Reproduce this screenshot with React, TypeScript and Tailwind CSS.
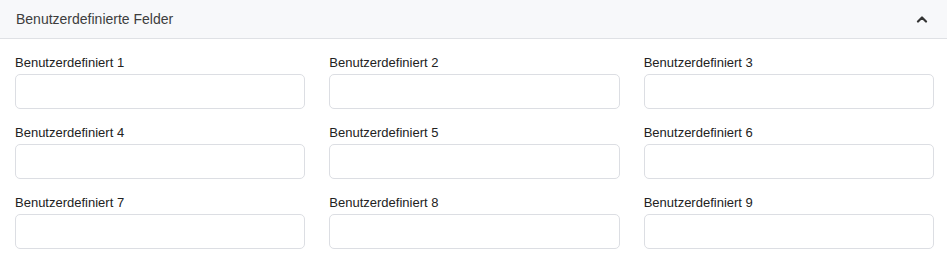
import React from 'react';

const fields = Array.from({ length: 9 }, (_, i) => `Benutzerdefiniert ${i + 1}`);

const ChevronUp = () => (
  <svg width="12" height="8" viewBox="0 0 12 8" fill="none">
    <path d="M2 6.5 L6 2.5 L10 6.5" stroke="#333" strokeWidth="2.2" strokeLinecap="round" strokeLinejoin="round" />
  </svg>
);

export default function App() {
  return (
    <div className="w-[947px] h-[273px] bg-white font-['Liberation_Sans',Arial,sans-serif]">
      <div className="h-[39px] flex items-center justify-between pl-4 pr-[19px] bg-[#f7f8fa] border-b border-[#dfe1e5]">
        <span className="text-[14px] text-[#3d3d3d]">Benutzerdefinierte Felder</span>
        <ChevronUp />
      </div>
      <div className="grid grid-cols-3 gap-x-6 gap-y-[15px] pl-[15px] pr-[13px] pt-[15px]">
        {fields.map((f) => (
          <div key={f} className="flex flex-col">
            <label className="text-[13px] leading-[17px] text-[#222] mb-[3px]">{f}</label>
            <input className="h-[35px] w-full rounded-[5px] border border-[#dcdee3] bg-white outline-none" />
          </div>
        ))}
      </div>
    </div>
  );
}
